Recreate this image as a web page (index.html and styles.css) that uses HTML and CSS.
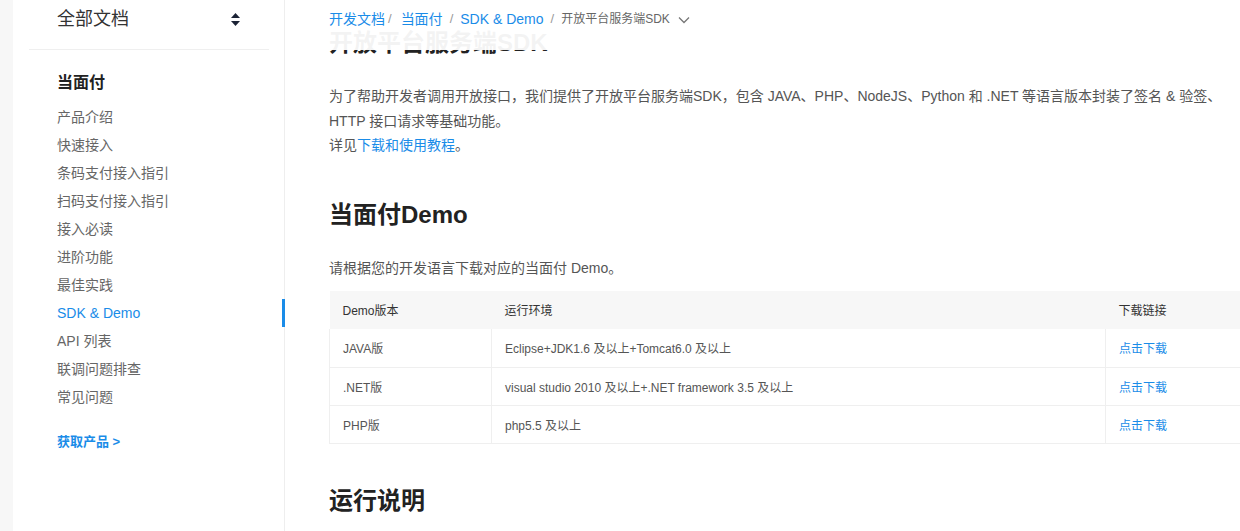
FILE: index.html
```html
<!DOCTYPE html>
<html lang="zh-CN">
<head>
<meta charset="utf-8">
<title>开放平台服务端SDK</title>
<link rel="stylesheet" href="styles.css">
</head>
<body>
<div class="page">
  <div class="gutter"></div>
  <aside class="sidebar">
    <div class="all-docs">
      <span class="all-docs-title">全部文档</span>
      <svg class="sort-icon" width="9" height="13" viewBox="0 0 9 13"><path d="M4.5 0 L9 5 L0 5 Z" fill="#1b2335"/><path d="M0 8 L9 8 L4.5 13 Z" fill="#1b2335"/></svg>
    </div>
    <div class="divider"></div>
    <div class="nav-title">当面付</div>
    <ul class="nav">
      <li class="nav-item">产品介绍</li>
      <li class="nav-item">快速接入</li>
      <li class="nav-item">条码支付接入指引</li>
      <li class="nav-item">扫码支付接入指引</li>
      <li class="nav-item">接入必读</li>
      <li class="nav-item">进阶功能</li>
      <li class="nav-item">最佳实践</li>
      <li class="nav-item active">SDK &amp; Demo</li>
      <li class="nav-item">API 列表</li>
      <li class="nav-item">联调问题排查</li>
      <li class="nav-item">常见问题</li>
    </ul>
    <a class="get-product">获取产品 &gt;</a>
  </aside>
  <main class="main">
    <div class="breadcrumb">
      <a class="crumb">开发文档</a><span class="sep sep-tight">/</span>
      <a class="crumb">当面付</a><span class="sep">/</span>
      <a class="crumb">SDK &amp; Demo</a><span class="sep">/</span>
      <span class="crumb-current">开放平台服务端SDK</span>
      <svg class="chevron" width="12" height="8" viewBox="0 0 12 8"><path d="M1 1.5 L6 6.5 L11 1.5" fill="none" stroke="#777" stroke-width="1.3"/></svg>
    </div>
    <div class="content">
      <h1 class="h1">开放平台服务端SDK</h1>
      <p class="para wide">为了帮助开发者调用开放接口，我们提供了开放平台服务端SDK，包含 JAVA、PHP、NodeJS、Python 和 .NET 等语言版本封装了签名 &amp; 验签、HTTP 接口请求等基础功能。<br>详见<a class="link">下载和使用教程</a>。</p>
      <h2 class="h2">当面付Demo</h2>
      <p class="para">请根据您的开发语言下载对应的当面付 Demo。</p>
      <table class="table">
        <colgroup><col class="c1"><col class="c2"><col class="c3"></colgroup>
        <thead>
          <tr><th>Demo版本</th><th>运行环境</th><th>下载链接</th></tr>
        </thead>
        <tbody>
          <tr><td>JAVA版</td><td>Eclipse+JDK1.6 及以上+Tomcat6.0 及以上</td><td><a class="link">点击下载</a></td></tr>
          <tr><td>.NET版</td><td>visual studio 2010 及以上+.NET framework 3.5 及以上</td><td><a class="link">点击下载</a></td></tr>
          <tr><td>PHP版</td><td>php5.5 及以上</td><td><a class="link">点击下载</a></td></tr>
        </tbody>
      </table>
      <h2 class="h2 h2-last">运行说明</h2>
    </div>
  </main>
</div>
</body>
</html>
```
FILE: styles.css
```css
* { box-sizing: border-box; }
html, body { margin: 0; padding: 0; }
body {
  font-family: "Liberation Sans", "Noto Sans CJK SC", sans-serif;
  background: #fff;
  color: #333;
  width: 1240px;
  height: 531px;
  overflow: hidden;
}
.page {
  display: flex;
  height: 531px;
}
.gutter {
  width: 13px;
  flex: none;
  background: #f7f7f7;
}
.sidebar {
  width: 272px;
  flex: none;
  border-right: 1px solid #eeeeee;
  position: relative;
}
.all-docs {
  height: 38px;
  display: flex;
  align-items: center;
  justify-content: space-between;
  padding: 0 44px 0 44px;
}
.all-docs-title {
  font-size: 18px;
  color: #333;
  line-height: 24px;
}
.divider {
  height: 1px;
  background: #efefef;
  margin: 11px 15px 0 16px;
}
.nav-title {
  font-size: 16px;
  font-weight: bold;
  color: #222;
  line-height: 24px;
  padding-left: 44px;
  margin-top: 21px;
}
.nav {
  list-style: none;
  margin: 8px 0 0 0;
  padding: 0;
}
.nav-item {
  height: 28px;
  line-height: 28px;
  font-size: 14px;
  color: #666;
  padding-left: 44px;
  position: relative;
}
.nav-item.active { color: #1a8ce8; }
.nav-item.active::after {
  content: "";
  position: absolute;
  right: -1px;
  top: 0;
  width: 3px;
  height: 28px;
  background: #1a8ce8;
}
.get-product {
  display: block;
  margin-top: 21px;
  padding-left: 44px;
  font-size: 13px;
  font-weight: bold;
  color: #1a8ce8;
  line-height: 20px;
}
.main {
  flex: 1;
  position: relative;
  overflow: hidden;
}
.breadcrumb {
  position: absolute;
  left: 0;
  top: 0;
  right: 0;
  height: 50px;
  background: rgba(255, 255, 255, 0.95);
  display: flex;
  align-items: flex-start;
  padding: 9px 0 0 44px;
  line-height: 20px;
  z-index: 2;
}
.crumb {
  font-size: 14px;
  color: #1a8ce8;
}
.sep {
  font-size: 13px;
  color: #999;
  margin: 0 7px 0 7px;
}
.sep-tight { margin: 0 9px 0 3px; }
.crumb-current {
  font-size: 12px;
  color: #666;
}
.chevron {
  margin: 7px 0 0 8px;
}
.content {
  padding: 27px 0 0 44px;
  width: 1000px;
}
.h1 {
  margin: 0;
  font-size: 24px;
  line-height: 32px;
  font-weight: bold;
  color: #222;
}
.h2 {
  margin: 41px 0 0 0;
  font-size: 24px;
  line-height: 32px;
  font-weight: bold;
  color: #222;
}
.para {
  margin: 25px 0 0 0;
  font-size: 14px;
  line-height: 24.5px;
  color: #555;
}
.para.wide { max-width: 900px; }
.link { color: #1a8ce8; }
.table {
  margin-top: 11px;
  border-collapse: collapse;
  table-layout: fixed;
  width: 936px;
  font-size: 12px;
}
.c1 { width: 162px; }
.c2 { width: 614px; }
.c3 { width: 160px; }
.table th {
  background: #f7f7f7;
  height: 38px;
  text-align: left;
  font-weight: normal;
  color: #333;
  padding: 0 13px 2px;
}
.table td {
  height: 38px;
  border: 1px solid #efefef;
  border-top: none;
  padding: 0 13px;
  color: #555;
}
```
